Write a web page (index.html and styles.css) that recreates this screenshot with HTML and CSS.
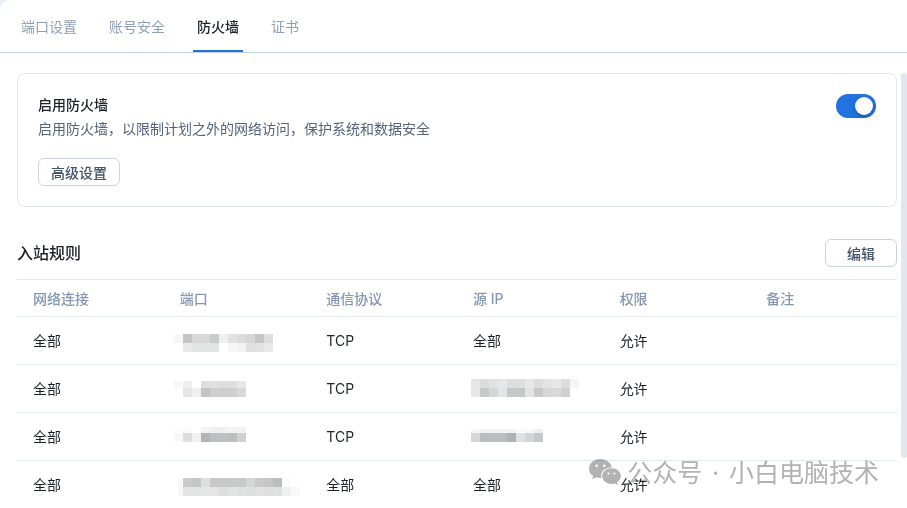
FILE: index.html
```
<!DOCTYPE html>
<html lang="zh-CN">
<head>
    <meta charset="UTF-8">
    <meta name="viewport" content="width=device-width, initial-scale=1.0">
    <title>防火墙</title>
    <link rel="stylesheet" href="styles.css">
</head>
<body>
    <div class="panel">
        <nav class="tabs">
            <a class="tab" href="#port">端口设置</a>
            <a class="tab" href="#account">账号安全</a>
            <a class="tab active" href="#firewall">防火墙</a>
            <a class="tab" href="#cert">证书</a>
        </nav>

        <div class="body">
            <main class="content">
                <section class="card">
                    <div class="card-text">
                        <label class="card-title" for="firewall-switch">启用防火墙</label>
                        <p class="card-desc">启用防火墙，以限制计划之外的网络访问，保护系统和数据安全</p>
                        <button class="btn" type="button">高级设置</button>
                    </div>
                    <input class="switch" type="checkbox" id="firewall-switch" checked>
                </section>

                <div class="rules-head">
                    <h2>入站规则</h2>
                    <button class="btn btn-edit" type="button">编辑</button>
                </div>

                <table class="rules">
                    <thead>
                        <tr>
                            <th>网络连接</th>
                            <th>端口</th>
                            <th>通信协议</th>
                            <th>源 IP</th>
                            <th>权限</th>
                            <th>备注</th>
                        </tr>
                    </thead>
                    <tbody>
                        <tr>
                            <td>全部</td>
                            <td class="masked"><svg class="mask" data-mask="port1"></svg></td>
                            <td>TCP</td>
                            <td>全部</td>
                            <td>允许</td>
                            <td></td>
                        </tr>
                        <tr>
                            <td>全部</td>
                            <td class="masked"><svg class="mask" data-mask="port2"></svg></td>
                            <td>TCP</td>
                            <td class="masked"><svg class="mask" data-mask="ip2"></svg></td>
                            <td>允许</td>
                            <td></td>
                        </tr>
                        <tr>
                            <td>全部</td>
                            <td class="masked"><svg class="mask" data-mask="port3"></svg></td>
                            <td>TCP</td>
                            <td class="masked"><svg class="mask" data-mask="ip3"></svg></td>
                            <td>允许</td>
                            <td></td>
                        </tr>
                        <tr>
                            <td>全部</td>
                            <td class="masked"><svg class="mask" data-mask="port4"></svg></td>
                            <td>全部</td>
                            <td>全部</td>
                            <td>允许</td>
                            <td></td>
                        </tr>
                    </tbody>
                </table>
            </main>
            <div class="scroll-thumb"></div>
        </div>

        <div class="watermark">
            <svg class="wechat" viewBox="0 0 32 26">
                <path fill="#b2b2b2" d="M11.500 0C5.100 0 0 4.300 0 9.700c0 3 1.600 5.600 4.200 7.400L3.200 20.300l3.900-2c1.400.5 2.900.8 4.400.8l1.100-.1a8 8 0 0 1-.4-2.400c0-4.600 4.300-8.200 9.600-8.200l1.100.1C21.900 3.600 17.200 0 11.500 0z"/>
                <path fill="#b2b2b2" d="M22.500 9.200c-5.200 0-9.300 3.400-9.300 7.800s4.100 7.900 9.300 7.900c1.100 0 2.200-.2 3.200-.5l3.100 1.600-.8-2.700c2.300-1.400 3.800-3.700 3.800-6.300 0-4.400-4.100-7.800-9.300-7.800z"/>
                <g fill="#fff">
                    <circle cx="7.700" cy="6.700" r="1.300"/>
                    <circle cx="15.300" cy="6.700" r="1.300"/>
                    <circle cx="19.400" cy="14.500" r="1.100"/>
                    <circle cx="25.500" cy="14.500" r="1.100"/>
                </g>
            </svg>
            <div class="account">
                <span>公众号</span>
                <span>·</span>
                <span>小白电脑技术</span>
            </div>
        </div>
    </div>

    <script>
        // each strip: x start, y start, height, then one colour per 9px block
        const masks = {
            port1: [
                [0, 8, 9, "#f7f7f7 #c4c4c4 #d8d8d8 #d8d8d8 #cbcbcb #f0f0f0 #e1e1e1 #dbdbdb #d6d7d9 #c5c5c5 #dcdddd"],
                [9, 17, 9, "#e9e9e9 #e2e4e4 #e2e4e4 #e3e5e5 #ffffff #f5f5f5 #f3f3f3 #e0e0e0 #e1e1e1 #e9e9e9"]
            ],
            port2: [
                [0, 7, 7, "#f8f8f8 #efefef #ffffff #dfdfdf #dfe1e1 #dddddd #dedede #e5e7e7"],
                [9, 14, 9, "#e6e6e6 #f0f0f0 #c4c4c4 #cfcfcf #cecece #cfcfcf #d8d8d8"]
            ],
            port3: [
                [0, 5, 6, "#fcfcfc #fbfbfb #ffffff #f3f3f3 #eeefef #eeefef #f3f3f3 #f1f2f2"],
                [0, 11, 9, "#f8f8f8 #dddddd #f1f1f1 #b2b3b5 #bdbebf #bfc0c1 #bcbdc0 #cfd0d3"]
            ],
            port4: [
                [4, 8, 9, "#f7f7f7"],
                [4, 17, 9, "#f7f7f7"],
                [9, 8, 9, "#c9cacc #c5c6c8 #dfdfdf #c9c9c9 #c9c9c9 #c9c9c9 #c9c9c9 #d5d7d6 #c9c9c9 #c5c6c7 #bcbdbd #fcfcfc"],
                [9, 17, 9, "#e2e5e4 #e2e5e4 #e5e5e5 #e2e5e4 #dfdfdf #e2e4e3 #e0e2e1 #dfdfdf #e2e2e2 #dfdfdf #dfe2e1 #f0f0f0 #f8f8f8"]
            ],
            ip2: [
                [4, 5, 9, "#e6e6e6 #dcdcdc #e2e2e2 #e6e8e7 #dddddd #dddede #e6e8e7 #dcdcdc #e3e3e3 #e9e9e9 #dcdcdc #f5f5f5"],
                [4, 14, 9, "#e8e8e8 #c7c8cb #d5d6d8 #e4e4e4 #c6c7ca #c6c7ca #e3e3e3 #c8c8c8 #d6d8d7 #d9d9d9 #cfd1d0"]
            ],
            ip3: [
                [4, 7, 4, "#f6f6f6 #f3f3f3 #f3f3f3 #f3f3f3 #f3f3f3 #f9fafa #f8f8f8 #f0f0f0"],
                [4, 11, 9, "#d6d8d7 #bbbcbd #bdbec0 #bbbcbd #b0b1b2 #dfe2e2 #d3d4d7 #c6c7c8"]
            ]
        };

        document.querySelectorAll(".mask").forEach(svg => {
            masks[svg.dataset.mask].forEach(([x, y, height, colors]) => {
                colors.split(" ").forEach((color, i) => {
                    const rect = document.createElementNS("http://www.w3.org/2000/svg", "rect");
                    rect.setAttribute("x", x + i * 9);
                    rect.setAttribute("y", y);
                    rect.setAttribute("width", 9);
                    rect.setAttribute("height", height);
                    rect.setAttribute("fill", color);
                    svg.appendChild(rect);
                });
            });
        });
    </script>
</body>
</html>
```
FILE: styles.css
```
* {
    box-sizing: border-box;
}

body {
    margin: 0;
    background: #edf2f8;
    font-family: Inter, "Noto Sans CJK SC", sans-serif;
    font-size: 14px;
    line-height: 24px;
    color: #1d2129;
}

.panel {
    position: relative;
    min-height: 100vh;
    background: white;
    border-top-left-radius: 10px;
}

.tabs {
    display: flex;
    gap: 24px;
    padding: 0 17px;
    border-bottom: 1px solid #c6d1de;
}

.tab {
    padding: 15px 4px 11px;
    border-bottom: 2px solid transparent;
    color: #8e9fb8;
    text-decoration: none;
}

.tab.active {
    border-bottom-color: #2272e0;
    color: #1d2129;
    font-weight: 500;
}

.body {
    display: flex;
    gap: 4px;
    padding: 20px 0 0 17px;
}

.content {
    flex: 1;
    min-width: 0;
}

.scroll-thumb {
    width: 6px;
    height: 385px;
    background: #e2e6f0;
    border-radius: 3px;
}

.card {
    display: flex;
    justify-content: space-between;
    align-items: flex-start;
    padding: 20px;
    border: 1px solid #e1e6ef;
    border-radius: 8px;
}

.card-title,
.card-desc {
    display: block;
    line-height: 22px;
}

.card-title {
    font-weight: 500;
}

.card-desc {
    margin: 2px 0 18px;
    color: #56627a;
}

.btn {
    height: 28px;
    padding: 2px 12px 0;
    background: white;
    border: 1px solid #c9d4e2;
    border-radius: 6px;
    font: inherit;
    font-weight: 500;
    color: #465268;
    cursor: pointer;
}

.btn-edit {
    min-width: 72px;
}

.switch {
    appearance: none;
    display: flex;
    justify-content: flex-end;
    align-items: center;
    width: 40px;
    height: 24px;
    margin: 0;
    padding: 3px;
    background: #2272e0;
    border-radius: 12px;
    cursor: pointer;
}

.switch::before {
    content: "";
    width: 18px;
    height: 18px;
    background: white;
    border-radius: 50%;
    box-shadow: 0 2px 4px rgba(0, 0, 0, 0.25);
}

.switch:not(:checked) {
    justify-content: flex-start;
    background: #c9d4e2;
}

.rules-head {
    display: flex;
    justify-content: space-between;
    align-items: center;
    padding: 32px 0 12px;
}

.rules-head h2 {
    margin: 0;
    font-size: 16px;
    font-weight: 500;
}

.rules {
    width: 100%;
    table-layout: fixed;
    border-collapse: separate;
    border-spacing: 0;
}

.rules th,
.rules td {
    height: 48px;
    padding: 0 16px;
    border-bottom: 1px solid #e1e8f0;
    text-align: left;
}

.rules th {
    height: 38px;
    padding-top: 2px;
    border-top: 1px solid #e1e8f0;
    color: #8496b0;
    font-weight: 500;
}

.rules tr:last-child td {
    height: 47px;
    border-bottom: none;
}

.rules .masked {
    padding: 0 10px;
}

.mask {
    display: block;
    width: 126px;
    height: 30px;
}

.watermark {
    position: absolute;
    right: 28px;
    bottom: 20px;
    display: flex;
    align-items: center;
    gap: 6px;
    color: #b2b2b2;
    font-family: "Noto Sans", "Noto Sans CJK SC", sans-serif;
    font-size: 25px;
    line-height: 32px;
    mix-blend-mode: multiply;
    pointer-events: none;
}

.account {
    display: flex;
    gap: 10px;
}

.wechat {
    width: 32px;
    height: 26px;
}
```
